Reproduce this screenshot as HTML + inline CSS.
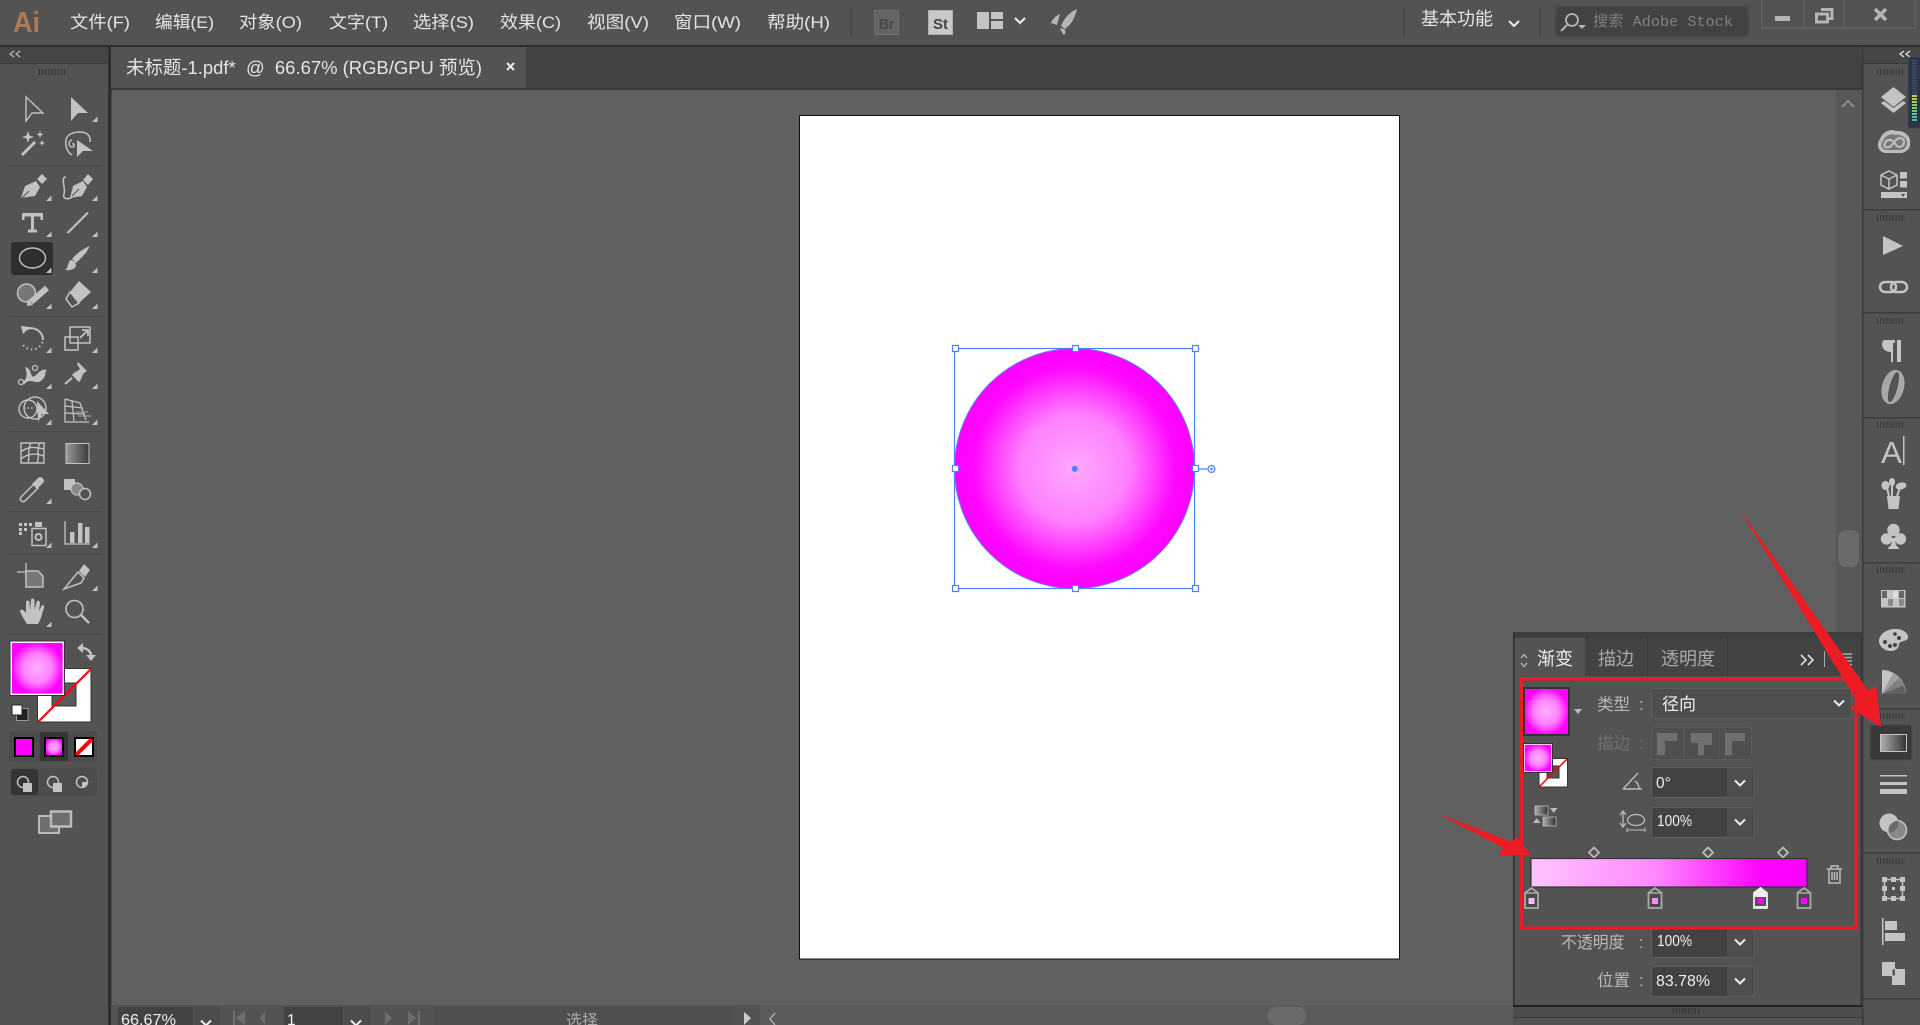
<!DOCTYPE html>
<html lang="zh"><head><meta charset="utf-8"><title>Illustrator</title>
<style>
html,body{margin:0;padding:0;background:#535353;overflow:hidden}
svg{display:block;position:absolute;left:0;top:0}
text{font-family:"Liberation Sans","Noto Sans CJK SC",sans-serif;fill:#e4e4e4}
.m{font-size:17px}
.l{font-size:16.500px;fill:#b8b8b8}
.d{font-size:16.500px;fill:#6f6f6f}
.v{font-size:15.500px;fill:#eee}
</style></head><body>
<svg width="1920" height="1025" viewBox="0 0 1920 1025" xmlns="http://www.w3.org/2000/svg">
<defs>
<radialGradient id="rg" cx="50%" cy="50%" r="50%"><stop offset="0" stop-color="#ffa8ff"/><stop offset=".45" stop-color="#ff80ff"/><stop offset=".84" stop-color="#ff08ff"/><stop offset="1" stop-color="#ff00ff"/></radialGradient>
<radialGradient id="rs" cx="50%" cy="50%" r="62%"><stop offset="0" stop-color="#ffb0ff"/><stop offset=".45" stop-color="#ff80ff"/><stop offset=".8" stop-color="#ff00ff"/><stop offset="1" stop-color="#ff00ff"/></radialGradient>
<linearGradient id="lg"><stop offset="0" stop-color="#ffc4ff"/><stop offset=".45" stop-color="#ff88ff"/><stop offset=".84" stop-color="#ff00ff"/><stop offset="1" stop-color="#ff00ff"/></linearGradient>
<linearGradient id="gt"><stop offset="0" stop-color="#999"/><stop offset="1" stop-color="#3c3c3c"/></linearGradient>
<linearGradient id="gi"><stop offset="0" stop-color="#b0b0b0"/><stop offset="1" stop-color="#333"/></linearGradient>
<linearGradient id="mt" x1="0" y1="0" x2="0" y2="1"><stop offset="0" stop-color="#c8d04a"/><stop offset=".5" stop-color="#7fc96a"/><stop offset="1" stop-color="#2fc9a8"/></linearGradient>
<path id="t" d="M0 0h5.500v-5.500z" fill="#c2c2c2"/>
<path id="ch" d="M-5 -2.500L0 2.500L5 -2.500" fill="none" stroke="#eee" stroke-width="2"/>
</defs>

<!-- base -->
<rect width="1920" height="1025" fill="#535353"/>
<rect y="45" width="1920" height="2" fill="#2f2f2f"/>

<!-- tab bar + canvas -->
<rect x="111" y="47" width="1751" height="41" fill="#424242"/>
<rect x="111" y="88" width="1751" height="2" fill="#3a3a3a"/>
<rect x="111" y="90" width="1725" height="915" fill="#606060"/>
<rect x="1836" y="90" width="26" height="915" fill="#585858"/>
<rect x="1838" y="530" width="21" height="37" rx="8" fill="#6a6a6a"/>
<path d="M1842 107l6-6 6 6" fill="none" stroke="#8a8a8a" stroke-width="2"/>
<rect x="108" y="47" width="3.500" height="978" fill="#2f2f2f"/>
<rect x="1862" y="47" width="1.500" height="978" fill="#3a3a3a"/>

<!-- doc tab -->
<rect x="111" y="47" width="415" height="41" fill="#535353"/>
<text x="126" y="74" font-size="18.500" textLength="356" lengthAdjust="spacingAndGlyphs">未标题-1.pdf*&#160;&#160;@&#160;&#160;66.67% (RGB/GPU 预览)</text>
<path d="M507 63l7 7M514 63l-7 7" stroke="#eee" stroke-width="2"/>

<!-- artboard -->
<rect x="799.500" y="115.500" width="600" height="843.500" fill="#fff" stroke="#111" stroke-width="1"/>
<circle cx="1074.500" cy="468.500" r="120" fill="url(#rg)" stroke="#5b7fff" stroke-width="1"/>
<g fill="#fff" stroke="#4d7fff" stroke-width="1.200">
<rect x="954.500" y="348.500" width="240" height="240" fill="none"/>
<rect x="952.500" y="345.500" width="6" height="6"/><rect x="1072.500" y="345.500" width="6" height="6"/><rect x="1192.500" y="345.500" width="6" height="6"/>
<rect x="952.500" y="465.500" width="6" height="6"/><rect x="1192.500" y="465.500" width="6" height="6"/>
<rect x="952.500" y="585.500" width="6" height="6"/><rect x="1072.500" y="585.500" width="6" height="6"/><rect x="1192.500" y="585.500" width="6" height="6"/>
<path d="M1198 469h10" fill="none"/>
<circle cx="1211.500" cy="469" r="3.400"/>
</g>
<circle cx="1211.500" cy="469" r="1.300" fill="#4d7fff"/>
<circle cx="1074.800" cy="468.700" r="3" fill="#4d7fff"/>

<!-- menu -->
<text x="13" y="32" font-size="29" font-weight="700" style="fill:#ae7a57" textLength="27" lengthAdjust="spacingAndGlyphs">Ai</text>
<text class="m" x="70" y="28" textLength="60" lengthAdjust="spacingAndGlyphs">文件(F)</text>
<text class="m" x="155" y="28" textLength="59" lengthAdjust="spacingAndGlyphs">编辑(E)</text>
<text class="m" x="239" y="28" textLength="63" lengthAdjust="spacingAndGlyphs">对象(O)</text>
<text class="m" x="329" y="28" textLength="59" lengthAdjust="spacingAndGlyphs">文字(T)</text>
<text class="m" x="413" y="28" textLength="61" lengthAdjust="spacingAndGlyphs">选择(S)</text>
<text class="m" x="500" y="28" textLength="61" lengthAdjust="spacingAndGlyphs">效果(C)</text>
<text class="m" x="587" y="28" textLength="62" lengthAdjust="spacingAndGlyphs">视图(V)</text>
<text class="m" x="674" y="28" textLength="67" lengthAdjust="spacingAndGlyphs">窗口(W)</text>
<text class="m" x="767" y="28" textLength="63" lengthAdjust="spacingAndGlyphs">帮助(H)</text>
<rect x="850" y="8" width="2" height="29" fill="#4a4a4a"/>
<rect x="874.500" y="10.500" width="24" height="24" fill="#646464" stroke="#6e6e6e"/>
<text x="879" y="29" font-size="15" font-weight="700" style="fill:#484848" textLength="15" lengthAdjust="spacingAndGlyphs">Br</text>
<rect x="928.500" y="10.500" width="24" height="24" fill="#c8c8c8" stroke="#b0b0b0"/>
<text x="933" y="29" font-size="15" font-weight="700" style="fill:#444" textLength="15" lengthAdjust="spacingAndGlyphs">St</text>
<path d="M977 12h12v17h-12zM991 12h12v7h-12zM991 21h12v8h-12z" fill="#c4c4c4"/>
<path d="M1015 18l5 5 5-5" fill="none" stroke="#eee" stroke-width="2"/>
<path d="M1077 9C1070 12 1064 18 1061 26L1065 29C1072 24 1075 17 1077 9ZM1060 14C1055 16 1052 20 1051 23L1057 25C1058 21 1059 18 1060 14ZM1064 29L1060 28C1061 31 1062 33 1064 35C1066 33 1066 31 1064 29Z" fill="#b4b4b4"/>
<rect x="1403" y="8" width="2" height="29" fill="#4a4a4a"/>
<text x="1421" y="25" font-size="18" textLength="72" lengthAdjust="spacingAndGlyphs">基本功能</text>
<path d="M1509 21l5 5 5-5" fill="none" stroke="#eee" stroke-width="2"/>
<rect x="1539" y="8" width="2" height="29" fill="#4a4a4a"/>
<rect x="1555.500" y="6.500" width="193" height="30" rx="3" fill="#424242" stroke="#4b4b4b" stroke-width="2"/>
<circle cx="1572" cy="20" r="6" fill="none" stroke="#b5b5b5" stroke-width="1.800"/>
<path d="M1567 25l-6 6" stroke="#b5b5b5" stroke-width="2"/>
<path d="M1578 25h8l-4 4z" fill="#b5b5b5"/>
<text x="1593" y="26" font-size="15" style="fill:#808080;font-family:'Liberation Mono','Noto Sans CJK SC',monospace" textLength="140" lengthAdjust="spacingAndGlyphs">搜索 Adobe Stock</text>
<path d="M1762 0v27q0 1 2 1h150q1 0 1-1V0M1804 0v28M1844 0v28" fill="none" stroke="#676767"/>
<rect x="1775" y="16" width="15" height="5" fill="#b4b4b4"/>
<path d="M1821 9.500h11v9h-3M1816.500 14h11v8h-11z" fill="none" stroke="#b4b4b4" stroke-width="3"/>
<path d="M1875 9l11 11M1886 9l-11 11" stroke="#b4b4b4" stroke-width="3.500"/>

<!-- left panel -->
<rect x="0" y="47" width="108" height="16" fill="#464646"/>
<rect x="0" y="63" width="108" height="1" fill="#3c3c3c"/>
<path d="M14 51l-4 3 4 3M20 51l-4 3 4 3" fill="none" stroke="#bbb" stroke-width="1.200"/>
<line x1="39" y1="72" x2="67" y2="72" stroke="#333" stroke-width="6" stroke-dasharray="1 2.100"/>
<g fill="#4a4a4a"><rect x="9" y="165" width="91" height="1"/><rect x="9" y="316" width="91" height="1"/><rect x="9" y="431" width="91" height="1"/><rect x="9" y="511" width="91" height="1"/><rect x="9" y="554" width="91" height="1"/><rect x="9" y="634" width="91" height="1"/></g>
<rect x="11" y="242" width="42" height="33" rx="3" fill="#2e2e2e"/>

<g fill="#c2c2c2" stroke="none">
<path d="M26 97L43 113H32L26 121Z" fill="none" stroke="#c2c2c2" stroke-width="1.400"/>
<path d="M71 97L88 113H78L71 121Z"/>
<path d="M22 155L35 142" stroke="#c2c2c2" stroke-width="3" />
<path d="M28 131l1.500 4.500 4.500 1.500-4.500 1.500-1.500 4.500-1.500-4.500-4.500-1.500 4.500-1.500zM40 131l1 2.500 2.500 1-2.500 1-1 2.500-1-2.500-2.500-1 2.500-1zM42 140l.9 2.100 2.100.9-2.100.9-.9 2.100-.9-2.100-2.100-.9 2.100-.9z"/>
<path d="M72 155C67 152 65 146 66 140C67 134 74 132 80 132C87 132 91 136 90 142" fill="none" stroke="#c2c2c2" stroke-width="1.500"/>
<path d="M72 140C68 141 68 147 72 147C75 147 75 143 72 144" fill="none" stroke="#c2c2c2" stroke-width="1.500"/>
<path d="M77 140L93 151H83L77 157Z"/>
<path d="M37 179L42 174L47 179L42 184Z"/>
<path d="M21 198L25 186L36 181L40 187L35 196Z"/>
<path d="M22 198l7-7" stroke="#535353" stroke-width="1"/>
<path d="M83 180L88 174L93 179L88 185ZM70 198L73 186L83 181L87 187L82 196Z"/>
<path d="M72 196l7-7" stroke="#535353" stroke-width="1"/>
<path d="M66 177C60 177 66 188 64 194C62 199 68 200 72 197" fill="none" stroke="#c2c2c2" stroke-width="1.500"/>
<path d="M22 213h21v7h-2.500v-3.500h-6.500v13h3v3h-9v-3h3v-13h-6.500v3.500H22z"/>
<path d="M67.500 233L88 212.500" stroke="#c2c2c2" stroke-width="2"/>
<ellipse cx="32.500" cy="258" rx="13" ry="10" fill="none" stroke="#c2c2c2" stroke-width="1.400"/>
<path d="M89.500 246C88 252 81 258 76 263L72 259C76 254 83 249 89.500 246Z"/>
<path d="M71 260C74 261 76 263 76 265C76 269 70 271 65 270C69 268 67 262 71 260Z"/>
<circle cx="26.500" cy="293" r="9" fill="#777" stroke="#c2c2c2" stroke-width="1.500"/>
<path d="M47 288L31 302" stroke="#c2c2c2" stroke-width="6"/>
<path d="M28 299l5 6-6 1z"/>
<path d="M79 281L91 292L79 303L70 292Z"/>
<path d="M70 292L79 303L72 307L66 299Z" fill="none" stroke="#c2c2c2" stroke-width="1.500"/>
<path d="M25 330C33 325 43 331 43 340" fill="none" stroke="#c2c2c2" stroke-width="2"/>
<path d="M42.500 342A11 11 0 0 1 22 343" fill="none" stroke="#c2c2c2" stroke-width="2" stroke-dasharray="1.500 3"/>
<path d="M21 326l9 1-7 7z"/>
<path d="M70 327h20v16h-20zM65 337h13v13h-13z" fill="none" stroke="#c2c2c2" stroke-width="1.500"/>
<path d="M80 338l7-7M82 330h6v6" fill="none" stroke="#c2c2c2" stroke-width="1.800"/>
<path d="M23 382C28 378 27 372 25 367C31 368 30 374 33 377C38 375 40 368 47 370C44 372 47 376 42 380C38 384 34 381 30 381C27 381 25 383 24 385Z"/>
<circle cx="21" cy="382" r="2.500" fill="none" stroke="#c2c2c2" stroke-width="1.300"/><circle cx="35" cy="368" r="2.500" fill="none" stroke="#c2c2c2" stroke-width="1.300"/>
<path d="M78 362L87 371L84 373C82 375 82 379 79 382L72 375C74 372 78 371 80 369L77 364Z"/>
<path d="M72 378L65 384" stroke="#c2c2c2" stroke-width="2"/>
<circle cx="28" cy="409" r="9" fill="none" stroke="#c2c2c2" stroke-width="1.400"/>
<circle cx="35" cy="408" r="11" fill="none" stroke="#c2c2c2" stroke-width="1.400"/>
<path d="M24 408h9" stroke="#c2c2c2" stroke-width="1.500" stroke-dasharray="1.500 2"/>
<path d="M37 401L49 414H42L38 422Z"/>
<path d="M65 399V422H89M65 399L80 403L86 420M65 406L83 408M65 413L85 414M72 401L74 421" fill="none" stroke="#c2c2c2" stroke-width="1.300"/>
<path d="M76 412h12M78 416h13" stroke="#999" stroke-width="1.200"/>
<path d="M21 443h23v20h-23zM21 452C28 446 34 447 44 449M21 459C28 453 36 453 44 456M31 443C27 450 30 457 28 463M40 443C36 449 40 456 37 463" fill="none" stroke="#c2c2c2" stroke-width="1.400"/>
<rect x="66" y="443.500" width="23" height="20" fill="url(#gt)" stroke="#c2c2c2" stroke-width="1"/>
<path d="M21 497L34 484L38 488L25 501C22 503 19 500 21 497Z" fill="none" stroke="#c2c2c2" stroke-width="1.500"/>
<path d="M32 484L38 478C41 475 46 480 43 483L37 489Z"/>
<rect x="64" y="479" width="11" height="11"/>
<circle cx="77" cy="489" r="6" fill="#888" stroke="#c2c2c2" stroke-width="1.200"/>
<circle cx="85" cy="494" r="5.500" fill="#535353" stroke="#c2c2c2" stroke-width="1.500"/>
<path d="M19 523h3v3h-3zM24 523h3v3h-3zM29 523h3v3h-3zM19 528h3v3h-3zM24 528h3v3h-3zM19 532h3v3h-3z"/>
<rect x="35" y="522" width="7" height="5"/>
<rect x="32" y="528.500" width="14" height="17" fill="none" stroke="#c2c2c2" stroke-width="1.500"/>
<circle cx="38.500" cy="537" r="3" fill="none" stroke="#c2c2c2" stroke-width="2"/>
<path d="M65 521V544H90" fill="none" stroke="#c2c2c2" stroke-width="1.300"/>
<rect x="70" y="532" width="4.500" height="11"/><rect x="78" y="523" width="4.500" height="20"/><rect x="85" y="527" width="4.500" height="16"/>
<path d="M17 572H34M26 563V580" stroke="#c2c2c2" stroke-width="1.300"/>
<path d="M26 571H38L43 576V587H26Z" fill="#777" stroke="#c2c2c2" stroke-width="1.500"/>
<path d="M84 564L90 570L85 577L79 571Z"/>
<path d="M78 572L84 578L81 583L64 589Z" fill="none" stroke="#c2c2c2" stroke-width="1.500"/>
<path d="M27 624C24 619 21 615 20 611C21 608 24 610 26 613L26 602C26 600 29 600 29.500 602L30 610L31 600C31 598 34 598 34.500 600L34.500 610L36.500 602C37 600 40 600 40 603L39 611L41.500 606C43 604 45 606 44 608C42 613 41 620 38 624Z"/>
<circle cx="74.500" cy="609" r="8.500" fill="none" stroke="#c2c2c2" stroke-width="1.600"/>
<path d="M81 615L89 623" stroke="#c2c2c2" stroke-width="2.400"/>
</g>
<g>
<use href="#t" x="92" y="122"/><use href="#t" x="46" y="201"/><use href="#t" x="92" y="201"/><use href="#t" x="46" y="237"/><use href="#t" x="92" y="237"/><use href="#t" x="46" y="273"/><use href="#t" x="92" y="273"/><use href="#t" x="46" y="309"/><use href="#t" x="92" y="309"/><use href="#t" x="46" y="353"/><use href="#t" x="92" y="353"/><use href="#t" x="46" y="389"/><use href="#t" x="92" y="389"/><use href="#t" x="46" y="425"/><use href="#t" x="92" y="425"/><use href="#t" x="46" y="504"/><use href="#t" x="46" y="548"/><use href="#t" x="92" y="548"/><use href="#t" x="92" y="591"/><use href="#t" x="46" y="627"/>
</g>

<!-- fill / stroke -->
<path d="M81 648C87 648 91 651 91 656" fill="none" stroke="#c2c2c2" stroke-width="2.500"/>
<path d="M77 648L83 643V653ZM86 655H96L91 661Z" fill="#c2c2c2"/>
<rect x="37.500" y="668.500" width="53.500" height="53.500" fill="#fff" stroke="#333"/>
<rect x="52" y="683" width="24" height="23" fill="#5a5a5a" stroke="#333"/>
<path d="M38 722L91 669" stroke="#f00" stroke-width="2"/>
<rect x="11" y="642" width="52.500" height="52.500" fill="url(#rs)" stroke="#fff" stroke-width="1.800"/>
<rect x="10" y="641" width="54.500" height="54.500" fill="none" stroke="#333" stroke-width="1"/>
<rect x="16.500" y="708.500" width="11.500" height="12" fill="#222" stroke="#999"/>
<rect x="12" y="705" width="10" height="10" fill="#fff" stroke="#222"/>
<rect x="9" y="731" width="88" height="31" rx="4" fill="#4c4c4c"/>
<rect x="40" y="732" width="28" height="29" fill="#373737"/>
<rect x="15" y="738" width="18" height="18" fill="#ff00ff" stroke="#000" stroke-width="2"/>
<rect x="45" y="738" width="18" height="18" fill="url(#rs)" stroke="#000" stroke-width="2"/>
<rect x="75" y="738" width="18" height="18" fill="#fff" stroke="#000" stroke-width="2"/>
<path d="M76 755L92 739" stroke="#f00" stroke-width="4"/>
<rect x="10" y="768" width="87" height="28" rx="4" fill="#4c4c4c"/>
<rect x="11" y="769" width="27" height="26" rx="3" fill="#353535"/>
<g fill="none" stroke="#c2c2c2" stroke-width="1.500">
<circle cx="23" cy="782" r="5.500"/><circle cx="53" cy="782" r="5.500"/><circle cx="82" cy="782" r="5.500"/>
</g>
<rect x="23" y="783" width="9" height="9" fill="#c2c2c2"/>
<rect x="53" y="783" width="9" height="9" fill="#c2c2c2"/>
<path d="M82 782h5.500a5.500 5.500 0 0 1-5.500 5.500z" fill="#c2c2c2"/>
<rect x="39" y="816" width="20" height="17" fill="#6e6e6e" stroke="#bbb" stroke-width="2"/>
<rect x="51" y="811.500" width="20" height="15" fill="#6e6e6e" stroke="#bbb" stroke-width="2.500"/>

<!-- right dock -->
<rect x="1863.500" y="47" width="56.500" height="16" fill="#464646"/>
<rect x="1863.500" y="63" width="56.500" height="1" fill="#3a3a3a"/>
<path d="M1904 51l-4 3 4 3M1910 51l-4 3 4 3" fill="none" stroke="#ddd" stroke-width="1.300"/>
<g fill="#3c3c3c"><rect x="1863" y="209" width="57" height="1.500"/><rect x="1863" y="312" width="57" height="1.500"/><rect x="1863" y="417" width="57" height="1.500"/><rect x="1863" y="562" width="57" height="1.500"/><rect x="1863" y="708" width="57" height="1.500"/><rect x="1863" y="852" width="57" height="1.500"/><rect x="1863" y="998" width="57" height="1.500"/></g>
<g stroke="#333" stroke-width="6" stroke-dasharray="1 2.100">
<line x1="1877" y1="72" x2="1905" y2="72"/><line x1="1877" y1="218" x2="1905" y2="218"/><line x1="1877" y1="321" x2="1905" y2="321"/><line x1="1877" y1="425" x2="1905" y2="425"/><line x1="1877" y1="570" x2="1905" y2="570"/><line x1="1877" y1="716" x2="1905" y2="716"/><line x1="1877" y1="861" x2="1905" y2="861"/>
</g>
<rect x="1908" y="57" width="16" height="71" rx="3" fill="#2c3345" stroke="#3d4660"/>
<line x1="1914.500" y1="60" x2="1914.500" y2="94" stroke="#3e4a60" stroke-width="5" stroke-dasharray="1.500 1"/>
<rect x="1912" y="94" width="5" height="27" fill="url(#mt)"/>
<line x1="1914.500" y1="94" x2="1914.500" y2="121" stroke="#2c3345" stroke-width="5" stroke-dasharray="1 2"/>

<g fill="#c4c4c4">
<path d="M1893.500 87L1906 97L1893.500 107L1881 97Z"/>
<path d="M1881 103L1884 101L1893.500 108L1903 101L1906 103L1893.500 113Z"/>
<!-- CC -->
<path d="M1885 153C1878 152 1876 144 1880 139C1882 133 1889 128 1896 131C1904 130 1911 136 1910 143C1911 149 1905 153 1900 153Z" fill="#bcbcbc"/>
<path d="M1886 150C1881 149 1880 144 1883 141C1885 136 1890 133 1896 135C1902 134 1907 138 1907 143C1907 147 1904 150 1900 150Z" fill="#777"/>
<path d="M1884 146C1886 137 1893 139 1896 145C1899 149 1904 146 1904 142C1904 138 1899 137 1896 140L1891 146C1889 148 1885 148 1884 145" fill="none" stroke="#bcbcbc" stroke-width="2.200"/>
<!-- libs -->
<path d="M1889 171L1897 175V185L1889 189L1881 185V175Z M1881 175L1889 179L1897 175M1889 179V189" fill="none" stroke="#c4c4c4" stroke-width="1.500"/>
<rect x="1900" y="172" width="7" height="6.500"/><rect x="1900" y="181" width="7" height="6.500"/><rect x="1881" y="192" width="26" height="6"/>
<path d="M1901 194h4l-2 3z" fill="#535353"/>
<path d="M1883 236L1903 246L1883 255Z"/>
<!-- link -->
<rect x="1880" y="282" width="16" height="10" rx="5" fill="none" stroke="#c4c4c4" stroke-width="2.500"/>
<rect x="1891" y="282" width="16" height="10" rx="5" fill="none" stroke="#c4c4c4" stroke-width="2.500"/>
<!-- pilcrow -->
<path d="M1895 340H1884C1880 343 1882 352 1891 352V362H1893V343H1895ZM1897 340H1901V362H1897Z"/>
<!-- O -->
<g transform="rotate(15 1893 387)"><ellipse cx="1893" cy="387" rx="11" ry="17.500" fill="#a8a8a8"/><ellipse cx="1893.500" cy="387" rx="4" ry="15.500" fill="#535353"/></g>
<text x="1881" y="463" font-size="31" font-weight="400" style="fill:#c4c4c4" textLength="21" lengthAdjust="spacingAndGlyphs">A</text>
<rect x="1903" y="436" width="1.500" height="29"/>
<!-- brushes -->
<path d="M1887 496h13l-1.500 13h-10z"/>
<path d="M1889 496L1887 488M1892 496V484M1897 496L1900 488" stroke="#c4c4c4" stroke-width="2" fill="none"/>
<ellipse cx="1885.500" cy="485.500" rx="4" ry="4.500"/><ellipse cx="1892" cy="482" rx="3" ry="4"/><ellipse cx="1901" cy="486" rx="5.500" ry="3.500" transform="rotate(-15 1901 486)"/>
<!-- club -->
<circle cx="1893.500" cy="530" r="6.200"/><circle cx="1886.500" cy="539" r="5.700"/><circle cx="1900.500" cy="539" r="5.700"/>
<path d="M1892 538h3c0 5 1 8 4 10v1h-11v-1c3-2 4-5 4-10z"/>
<!-- swatches -->
<rect x="1881" y="590" width="24.500" height="17.500" fill="#c4c4c4"/>
<g fill="#666"><rect x="1882" y="591" width="5" height="7"/><rect x="1899" y="591" width="5" height="7"/></g>
<g fill="#8a8a8a"><rect x="1888" y="599" width="5" height="7"/><rect x="1899" y="599" width="5" height="7"/></g>
<g fill="#ddd"><rect x="1893" y="591" width="5" height="7"/></g>
<!-- palette -->
<path d="M1893 629C1902 628 1909 633 1908 638C1907 642 1900 640 1899 644C1899 648 1896 651 1891 651C1884 651 1879 646 1879 641C1879 635 1885 630 1893 629Z"/>
<g fill="#444"><circle cx="1885" cy="642" r="2"/><circle cx="1890" cy="646" r="2"/><circle cx="1895" cy="645" r="2"/><circle cx="1899" cy="638" r="2"/><circle cx="1895" cy="634" r="1.800"/></g>
<!-- guide -->
<path d="M1882 670A24 24 0 0 1 1906 694H1882Z"/>
<path d="M1882 694L1893 673A24 24 0 0 1 1906 694Z" fill="#a0a0a0"/>
<path d="M1882 694L1899 678A24 24 0 0 1 1906 694Z" fill="#808080"/>
<path d="M1882 694L1903 686A24 24 0 0 1 1906 694Z" fill="#606060"/>
<!-- gradient active -->
<rect x="1870" y="725" width="42" height="35" rx="3" fill="#393939" stroke="#4a4a4a"/>
<rect x="1880.500" y="734.500" width="26" height="17" fill="url(#gi)" stroke="#c4c4c4"/>
<!-- stroke -->
<rect x="1880" y="775" width="27" height="1.500"/><rect x="1880" y="782" width="27" height="3"/><rect x="1880" y="789" width="27" height="5"/>
<!-- transparency -->
<circle cx="1889" cy="823" r="9.500"/>
<circle cx="1897" cy="830" r="9.500" fill="#888" stroke="#c4c4c4" stroke-width="1.500"/>
<path d="M1889.500 832.500A9.500 9.500 0 0 1 1898 820.500A9.500 9.500 0 0 1 1889.500 832.500Z" fill="#6a6a6a"/>
<!-- transform -->
<rect x="1884.500" y="879.500" width="18" height="19" fill="none" stroke="#c4c4c4" stroke-width="1.500"/>
<g><rect x="1882" y="877" width="5" height="5"/><rect x="1891" y="877" width="5" height="5"/><rect x="1900" y="877" width="5" height="5"/><rect x="1882" y="886" width="5" height="5"/><rect x="1900" y="886" width="5" height="5"/><rect x="1882" y="896" width="5" height="5"/><rect x="1891" y="896" width="5" height="5"/><rect x="1900" y="896" width="5" height="5"/><rect x="1892" y="887" width="3" height="3"/></g>
<!-- align -->
<rect x="1882" y="918" width="1.500" height="27"/><rect x="1885" y="921" width="12" height="9"/><rect x="1885" y="933" width="20" height="8"/>
<!-- pathfinder -->
<rect x="1882" y="962" width="13" height="14"/>
<rect x="1892" y="969" width="13" height="16"/>
<rect x="1892" y="969" width="3.500" height="7" fill="#535353" stroke="#c4c4c4"/>
</g>

<!-- status bar -->
<rect x="111" y="1005" width="1402" height="20" fill="#535353"/>
<rect x="760" y="1005" width="753" height="20" fill="#5b5b5b"/>
<rect x="1268" y="1007" width="38" height="18" rx="8" fill="#6a6a6a"/>
<rect x="118" y="1007" width="75" height="18" fill="#424242"/>
<rect x="194" y="1007" width="26" height="18" fill="#4c4c4c"/>
<text class="v" x="121" y="1025" textLength="55" lengthAdjust="spacingAndGlyphs">66.67%</text>
<use href="#ch" x="206" y="1023"/>
<g fill="#6e6e6e"><rect x="233" y="1011" width="2" height="14"/><path d="M245 1011V1025L236 1018Z M265 1011V1025L260 1018Z"/></g>
<rect x="284" y="1007" width="59" height="18" fill="#424242"/>
<rect x="344" y="1007" width="26" height="18" fill="#4c4c4c"/>
<text class="v" x="287" y="1025">1</text>
<use href="#ch" x="356" y="1023"/>
<g fill="#6e6e6e"><path d="M385 1011V1025L392 1018Z M408 1011V1025L416 1018Z"/><rect x="418" y="1011" width="2" height="14"/></g>
<rect x="434" y="1007" width="299" height="18" fill="#4f4f4f"/>
<text x="566" y="1026" font-size="16" style="fill:#aaa">选择</text>
<path d="M744 1012V1025L751 1018Z" fill="#ccc"/>
<path d="M775 1013l-5 6 5 6" fill="none" stroke="#aaa" stroke-width="1.500"/>

<!-- gradient panel -->
<rect x="1513" y="632" width="349" height="6" fill="#3e3e3e"/>
<rect x="1513" y="638" width="349" height="38" fill="#434343"/>
<rect x="1513" y="638" width="72" height="38" fill="#535353"/>
<rect x="1647" y="638" width="1" height="38" fill="#3a3a3a"/>
<rect x="1727" y="638" width="1" height="38" fill="#3a3a3a"/>
<rect x="1513" y="676" width="349" height="330" fill="#535353"/>
<rect x="1513" y="632" width="1.500" height="374" fill="#2f2f2f"/>
<rect x="1860.500" y="632" width="1.500" height="374" fill="#3a3a3a"/>
<rect x="1513" y="1005" width="349" height="2" fill="#222"/>
<rect x="1513" y="1007" width="349" height="10" fill="#4d4d4d"/>
<rect x="1513" y="1017" width="349" height="1" fill="#3a3a3a"/>
<rect x="1514" y="1018" width="348" height="7" fill="#535353"/>
<line x1="1673" y1="1011" x2="1701" y2="1011" stroke="#333" stroke-width="6" stroke-dasharray="1 2.100"/>
<path d="M1521 658l3-3.500 3 3.500M1521 663l3 3.500 3-3.500" fill="none" stroke="#bbb" stroke-width="1.300"/>
<text x="1537" y="665" font-size="18" style="fill:#eee">渐变</text>
<text x="1598" y="665" font-size="18" style="fill:#aaa">描边</text>
<text x="1661" y="665" font-size="18" style="fill:#aaa">透明度</text>
<path d="M1801 655l5 5-5 5M1808 655l5 5-5 5" fill="none" stroke="#ddd" stroke-width="1.600"/>
<rect x="1824" y="651" width="1" height="16" fill="#aaa"/>
<path d="M1838 654h14M1838 657.500h14M1838 661h14M1838 664.500h14" stroke="#aaa" stroke-width="1.500"/>

<rect x="1524" y="688" width="45" height="47" fill="url(#rs)" stroke="#333" stroke-width="2"/>
<path d="M1574 709h8l-4 5z" fill="#bbb"/>
<rect x="1539" y="758.500" width="28.500" height="28.500" fill="#fff" stroke="#333"/>
<rect x="1547" y="766" width="12" height="12" fill="#535353" stroke="#333"/>
<path d="M1539 787L1567 759" stroke="#f00" stroke-width="1.500"/>
<rect x="1524" y="744" width="28" height="28" fill="url(#rs)" stroke="#fff" stroke-width="1.500"/>
<rect x="1523.500" y="743.500" width="29" height="29" fill="none" stroke="#333"/>
<rect x="1535" y="806" width="13" height="9" fill="url(#gi)" stroke="#bbb" stroke-width=".8"/>
<rect x="1543" y="817" width="13" height="9" fill="url(#gi)" stroke="#bbb" stroke-width=".8"/>
<path d="M1550 808h7.500l-3.750 5zM1533 823h7.500l-3.750-5z" fill="#bbb"/>

<text class="l" x="1597" y="710">类型<tspan x="1639">:</tspan></text>
<rect x="1651.500" y="688.500" width="200" height="30" rx="3" fill="#4e4e4e" stroke="#5d5d5d" stroke-width="1"/>
<text x="1662" y="710" font-size="17" style="fill:#eee">径向</text>
<use href="#ch" x="1839" y="703"/>

<text class="d" x="1597" y="749">描边<tspan x="1639">:</tspan></text>
<rect x="1651.500" y="727.500" width="100" height="32" rx="3" fill="#4f4f4f" stroke="#5a5a5a"/>
<path d="M1684 728v31M1719 728v31" stroke="#5a5a5a"/>
<g fill="#707070"><path d="M1657 733h20v8h-12v14h-8z"/><path d="M1691 733h21v12h-8v10h-6v-12h-7z"/><path d="M1725 733h20v8h-13v14h-7z"/></g>

<!-- angle -->
<path d="M1623 789H1642M1623 789L1638 773M1635 781C1638 783 1639 786 1639 789" fill="none" stroke="#bbb" stroke-width="1.400"/>
<g>
<rect x="1651.500" y="767.500" width="103" height="30" rx="3" fill="#4e4e4e" stroke="#5d5d5d"/>
<path d="M1652 770a2 2 0 0 1 2-2h73v29h-73a2 2 0 0 1-2-2z" fill="#424242"/>
<text class="v" x="1656" y="788" font-size="17">0°</text>
<use href="#ch" x="1740" y="783"/>
<rect x="1651.500" y="807.500" width="103" height="30" rx="3" fill="#4e4e4e" stroke="#5d5d5d"/>
<path d="M1652 810a2 2 0 0 1 2-2h73v29h-73a2 2 0 0 1-2-2z" fill="#424242"/>
<text class="v" x="1657" y="826" textLength="35" lengthAdjust="spacingAndGlyphs">100%</text>
<use href="#ch" x="1740" y="822"/>
</g>
<path d="M1623 812V826M1620 815l3-4 3 4M1620 823l3 4 3-4" fill="none" stroke="#bbb" stroke-width="1.300"/>
<ellipse cx="1636" cy="820" rx="8.500" ry="5.500" fill="none" stroke="#bbb" stroke-width="1.300"/>
<path d="M1627 828V832M1645 828V832M1627 830H1645" fill="none" stroke="#bbb" stroke-width="1"/>

<!-- diamonds -->
<g fill="none" stroke="#bbb" stroke-width="1.800"><path d="M1594 847.500l5 5-5 5-5-5z"/><path d="M1708 847.500l5 5-5 5-5-5z"/><path d="M1783 847.500l5 5-5 5-5-5z"/></g>
<rect x="1531" y="858.500" width="276" height="28.500" fill="url(#lg)" stroke="#333" stroke-width="1.200"/>
<!-- trash -->
<path d="M1827 869h15M1831 869v-3h7v3M1829 869v14h11v-14M1832 872v8M1834.500 872v8M1837 872v8" fill="none" stroke="#bbb" stroke-width="1.500"/>
<!-- stops -->
<g fill="#4a4a4a" stroke="#aaa" stroke-width="1.800">
<path d="M1531.500 888L1538 893V908H1525V893Z"/>
<path d="M1655 888L1661.500 893V908H1648.500V893Z"/>
<path d="M1804 888L1810.500 893V908H1797.500V893Z"/>
<path d="M1760.500 888L1767 893V908H1754V893Z" fill="#535353" stroke="#eee"/>
</g>
<path d="M1525 893H1538M1648.500 893H1661.500M1797.500 893H1810.500" stroke="#aaa" stroke-width="1.500"/>
<path d="M1760.500 887L1767.500 893V897H1753.500V893Z" fill="#eee"/>
<rect x="1754" y="906" width="13" height="2" fill="#eee"/>
<rect x="1528.500" y="898" width="6" height="6" fill="#ffb8ff"/>
<rect x="1652" y="898" width="6" height="6" fill="#ff88ff"/>
<rect x="1757.500" y="898" width="6" height="6" fill="#ff00ff"/>
<rect x="1801" y="898" width="6" height="6" fill="#ff00ff"/>

<text class="l" x="1561" y="948" textLength="68" lengthAdjust="spacingAndGlyphs">不透明度<tspan x="1639">:</tspan></text>
<rect x="1651.500" y="927.500" width="103" height="30" rx="3" fill="#4e4e4e" stroke="#5d5d5d"/>
<path d="M1652 930a2 2 0 0 1 2-2h73v29h-73a2 2 0 0 1-2-2z" fill="#424242"/>
<text class="v" x="1657" y="946" textLength="35" lengthAdjust="spacingAndGlyphs">100%</text>
<use href="#ch" x="1740" y="942"/>
<text class="l" x="1597" y="986">位置<tspan x="1639">:</tspan></text>
<rect x="1651.500" y="966.500" width="103" height="30" rx="3" fill="#4e4e4e" stroke="#5d5d5d"/>
<path d="M1652 969a2 2 0 0 1 2-2h73v29h-73a2 2 0 0 1-2-2z" fill="#424242"/>
<text class="v" x="1656" y="986" textLength="54" lengthAdjust="spacingAndGlyphs">83.78%</text>
<use href="#ch" x="1740" y="981"/>

<!-- red annotation -->
<rect x="1521.500" y="679" width="334.500" height="249" fill="none" stroke="#ed1c24" stroke-width="3"/>
<path d="M1738 507L1868 690L1876 686L1881 727L1850 708L1858 703Z" fill="#ed1c24"/>
<path d="M1437 813L1512 842L1516 836L1531 855L1498 856L1503 848Z" fill="#ed1c24"/>
</svg>
</body></html>
